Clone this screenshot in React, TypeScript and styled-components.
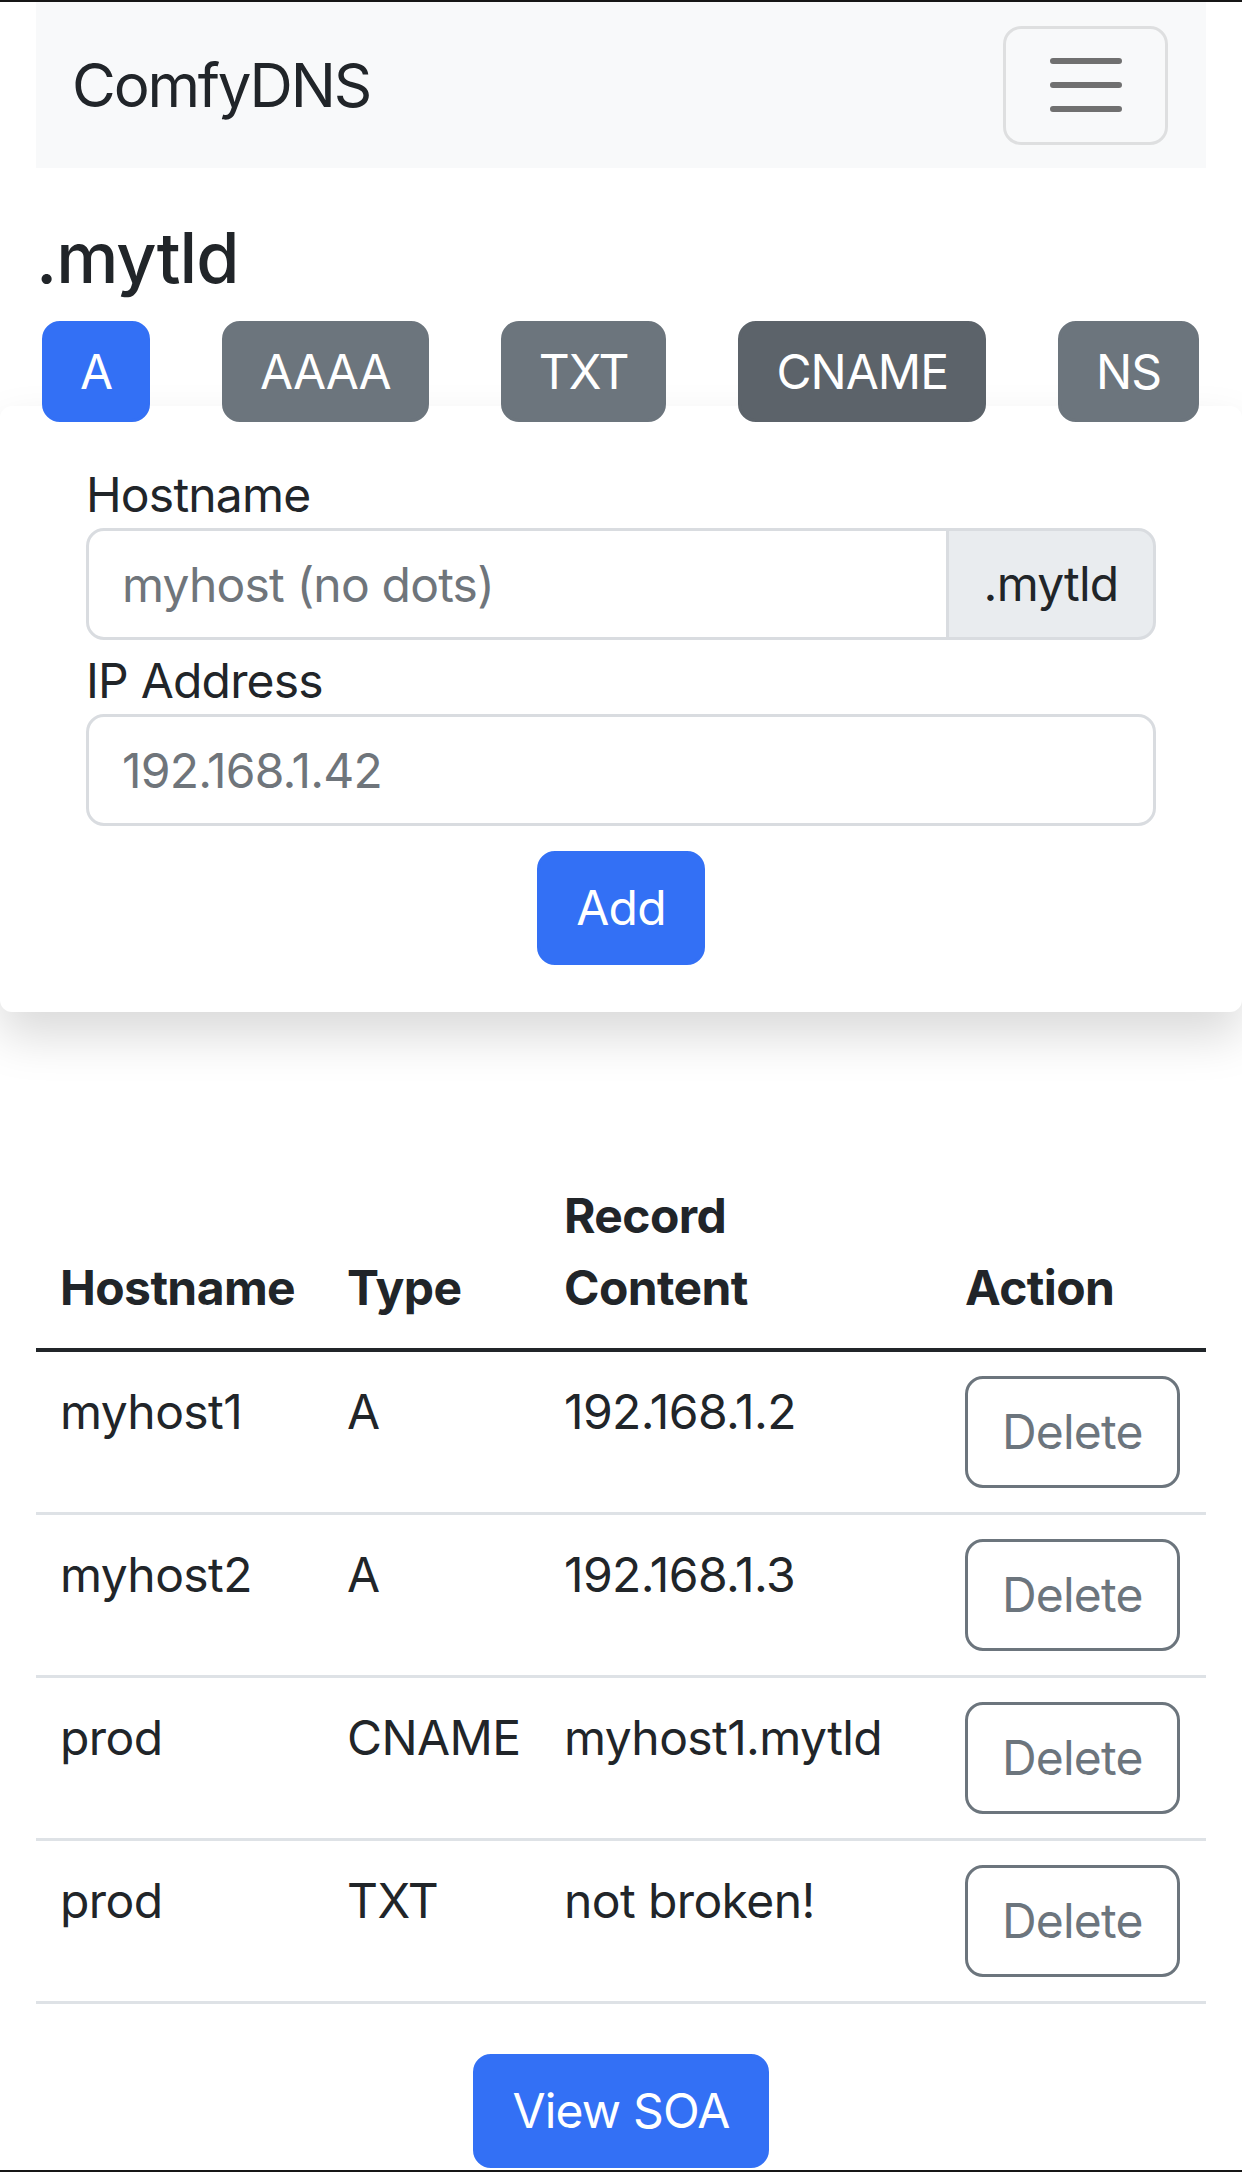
import React from "react";
import styled, { createGlobalStyle } from "styled-components";

const GlobalStyle = createGlobalStyle`
  * { box-sizing: border-box; }
  html, body { margin: 0; padding: 0; background: #ffffff; }
  body {
    font-family: Inter, "Noto Sans", "Liberation Sans", sans-serif;
    color: #212529;
    font-size: 48px;
    line-height: 1.5;
  }
`;

const Frame = styled.div`
  height: 2172px;
  overflow: hidden;
  border-top: 2px solid #161616;
  border-bottom: 2px solid #161616;
  background: #fff;
`;

const Container = styled.div`
  padding: 0 36px;
`;

const Navbar = styled.nav`
  height: 166px;
  background: #f8f9fa;
  display: flex;
  align-items: center;
  justify-content: space-between;
  padding: 0 38px 0 36px;
`;

const Brand = styled.a`
  font-size: 60px;
  line-height: 1;
  color: #212529;
  text-decoration: none;
  letter-spacing: -2.2px;
`;

const Toggler = styled.button`
  width: 165px;
  height: 119px;
  border: 3px solid rgba(0, 0, 0, 0.1);
  border-radius: 18px;
  background: transparent;
  display: flex;
  align-items: center;
  justify-content: center;
  padding: 0;
`;

const Title = styled.h4`
  font-size: 70px;
  font-weight: 500;
  line-height: 84px;
  margin: 48px 0 21px;
  letter-spacing: -1px;
`;

const TypeBar = styled.div`
  display: flex;
  justify-content: space-between;
  padding: 0 7px 0 6px;
  position: relative;
  z-index: 1;
`;

type Variant = "primary" | "secondary" | "active";

const variantColor = (v: Variant) =>
  v === "primary" ? "#3370f5" : v === "active" ? "#5c636a" : "#6c757d";

const TypeButton = styled.button<{ $variant: Variant }>`
  height: 101px;
  padding: 0 35px;
  border: 3px solid ${(p) => variantColor(p.$variant)};
  background: ${(p) => variantColor(p.$variant)};
  color: #fff;
  border-radius: 18px;
  font-family: inherit;
  font-size: 48px;
  line-height: 1;
  letter-spacing: -1px;
`;

const Card = styled.section`
  margin: -16px -36px 0;
  background: #fff;
  border-radius: 12px;
  box-shadow: 0 24px 48px rgba(0, 0, 0, 0.15);
  padding: 56px 86px 47px;
  display: flex;
  flex-direction: column;
`;

const Field = styled.div<{ $gap?: number }>`
  display: flex;
  flex-direction: column;
  margin-top: ${(p) => p.$gap ?? 0}px;
`;

const Label = styled.label`
  display: block;
  height: 66px;
  line-height: 66px;
  font-size: 48px;
  letter-spacing: -0.8px;
`;

const InputGroup = styled.div`
  display: flex;
  height: 112px;
`;

const Input = styled.input<{ $joined?: boolean }>`
  flex: 1 1 auto;
  min-width: 0;
  width: 100%;
  height: 112px;
  border: 3px solid #d9dce0;
  border-radius: ${(p) => (p.$joined ? "18px 0 0 18px" : "18px")};
  padding: 0 33px;
  font-family: inherit;
  font-size: 48px;
  letter-spacing: -0.8px;
  color: #212529;
  background: #fff;
  &::placeholder { color: #6f757b; }
`;

const Addon = styled.span`
  flex: 0 0 210px;
  height: 112px;
  margin-left: -3px;
  display: flex;
  align-items: center;
  justify-content: center;
  background: #e9ecef;
  border: 3px solid #d9dce0;
  border-radius: 0 18px 18px 0;
  font-size: 48px;
  letter-spacing: -0.8px;
`;

const SolidButton = styled.button`
  align-self: center;
  height: 114px;
  padding: 0 36px;
  border: 3px solid #3370f5;
  background: #3370f5;
  color: #fff;
  border-radius: 18px;
  font-family: inherit;
  font-size: 48px;
  line-height: 1;
  letter-spacing: -0.8px;
`;

const AddButton = styled(SolidButton)`
  margin-top: 25px;
`;

const Table = styled.table`
  width: 100%;
  margin-top: 144px;
  border-collapse: collapse;
  table-layout: fixed;
  letter-spacing: -0.6px;
`;

const HeadCell = styled.th`
  text-align: left;
  vertical-align: bottom;
  font-weight: 700;
  padding: 24px;
  line-height: 72px;
  border-bottom: 4px solid #212529;
`;

const Cell = styled.td`
  vertical-align: top;
  padding: 24px;
  line-height: 72px;
  border-bottom: 3px solid #dee2e6;
  white-space: nowrap;
`;

const DeleteButton = styled.button`
  height: 112px;
  padding: 0 34px;
  border: 3px solid #6c757d;
  border-radius: 18px;
  background: #fff;
  color: #6c757d;
  font-family: inherit;
  font-size: 48px;
  line-height: 1;
  letter-spacing: -0.8px;
`;

const Footer = styled.div`
  display: flex;
  justify-content: center;
  margin-top: 50px;
`;

const HamburgerIcon = () => (
  <svg width="90" height="90" viewBox="0 0 30 30" aria-hidden="true">
    <path
      d="M4 7h22M4 15h22M4 23h22"
      stroke="#707070"
      strokeWidth="2"
      strokeLinecap="round"
      fill="none"
    />
  </svg>
);

const types: { label: string; variant: Variant }[] = [
  { label: "A", variant: "primary" },
  { label: "AAAA", variant: "secondary" },
  { label: "TXT", variant: "secondary" },
  { label: "CNAME", variant: "active" },
  { label: "NS", variant: "secondary" },
];

const records = [
  { host: "myhost1", type: "A", content: "192.168.1.2" },
  { host: "myhost2", type: "A", content: "192.168.1.3" },
  { host: "prod", type: "CNAME", content: "myhost1.mytld" },
  { host: "prod", type: "TXT", content: "not broken!" },
];

export default function App() {
  return (
    <>
      <GlobalStyle />
      <Frame>
        <Container>
          <Navbar>
            <Brand href="#">ComfyDNS</Brand>
            <Toggler aria-label="Toggle navigation">
              <HamburgerIcon />
            </Toggler>
          </Navbar>
          <Title>.mytld</Title>
          <TypeBar>
            {types.map((t) => (
              <TypeButton key={t.label} $variant={t.variant}>
                {t.label}
              </TypeButton>
            ))}
          </TypeBar>
          <Card>
            <Field>
              <Label>Hostname</Label>
              <InputGroup>
                <Input $joined placeholder="myhost (no dots)" />
                <Addon>.mytld</Addon>
              </InputGroup>
            </Field>
            <Field $gap={8}>
              <Label>IP Address</Label>
              <Input placeholder="192.168.1.42" />
            </Field>
            <AddButton>Add</AddButton>
          </Card>
          <Table>
            <colgroup>
              <col style={{ width: 287 }} />
              <col style={{ width: 217 }} />
              <col style={{ width: 401 }} />
              <col style={{ width: 265 }} />
            </colgroup>
            <thead>
              <tr>
                <HeadCell>Hostname</HeadCell>
                <HeadCell>Type</HeadCell>
                <HeadCell>Record Content</HeadCell>
                <HeadCell>Action</HeadCell>
              </tr>
            </thead>
            <tbody>
              {records.map((r, i) => (
                <tr key={i}>
                  <Cell>{r.host}</Cell>
                  <Cell>{r.type}</Cell>
                  <Cell>{r.content}</Cell>
                  <Cell>
                    <DeleteButton>Delete</DeleteButton>
                  </Cell>
                </tr>
              ))}
            </tbody>
          </Table>
          <Footer>
            <SolidButton>View SOA</SolidButton>
          </Footer>
        </Container>
      </Frame>
    </>
  );
}
